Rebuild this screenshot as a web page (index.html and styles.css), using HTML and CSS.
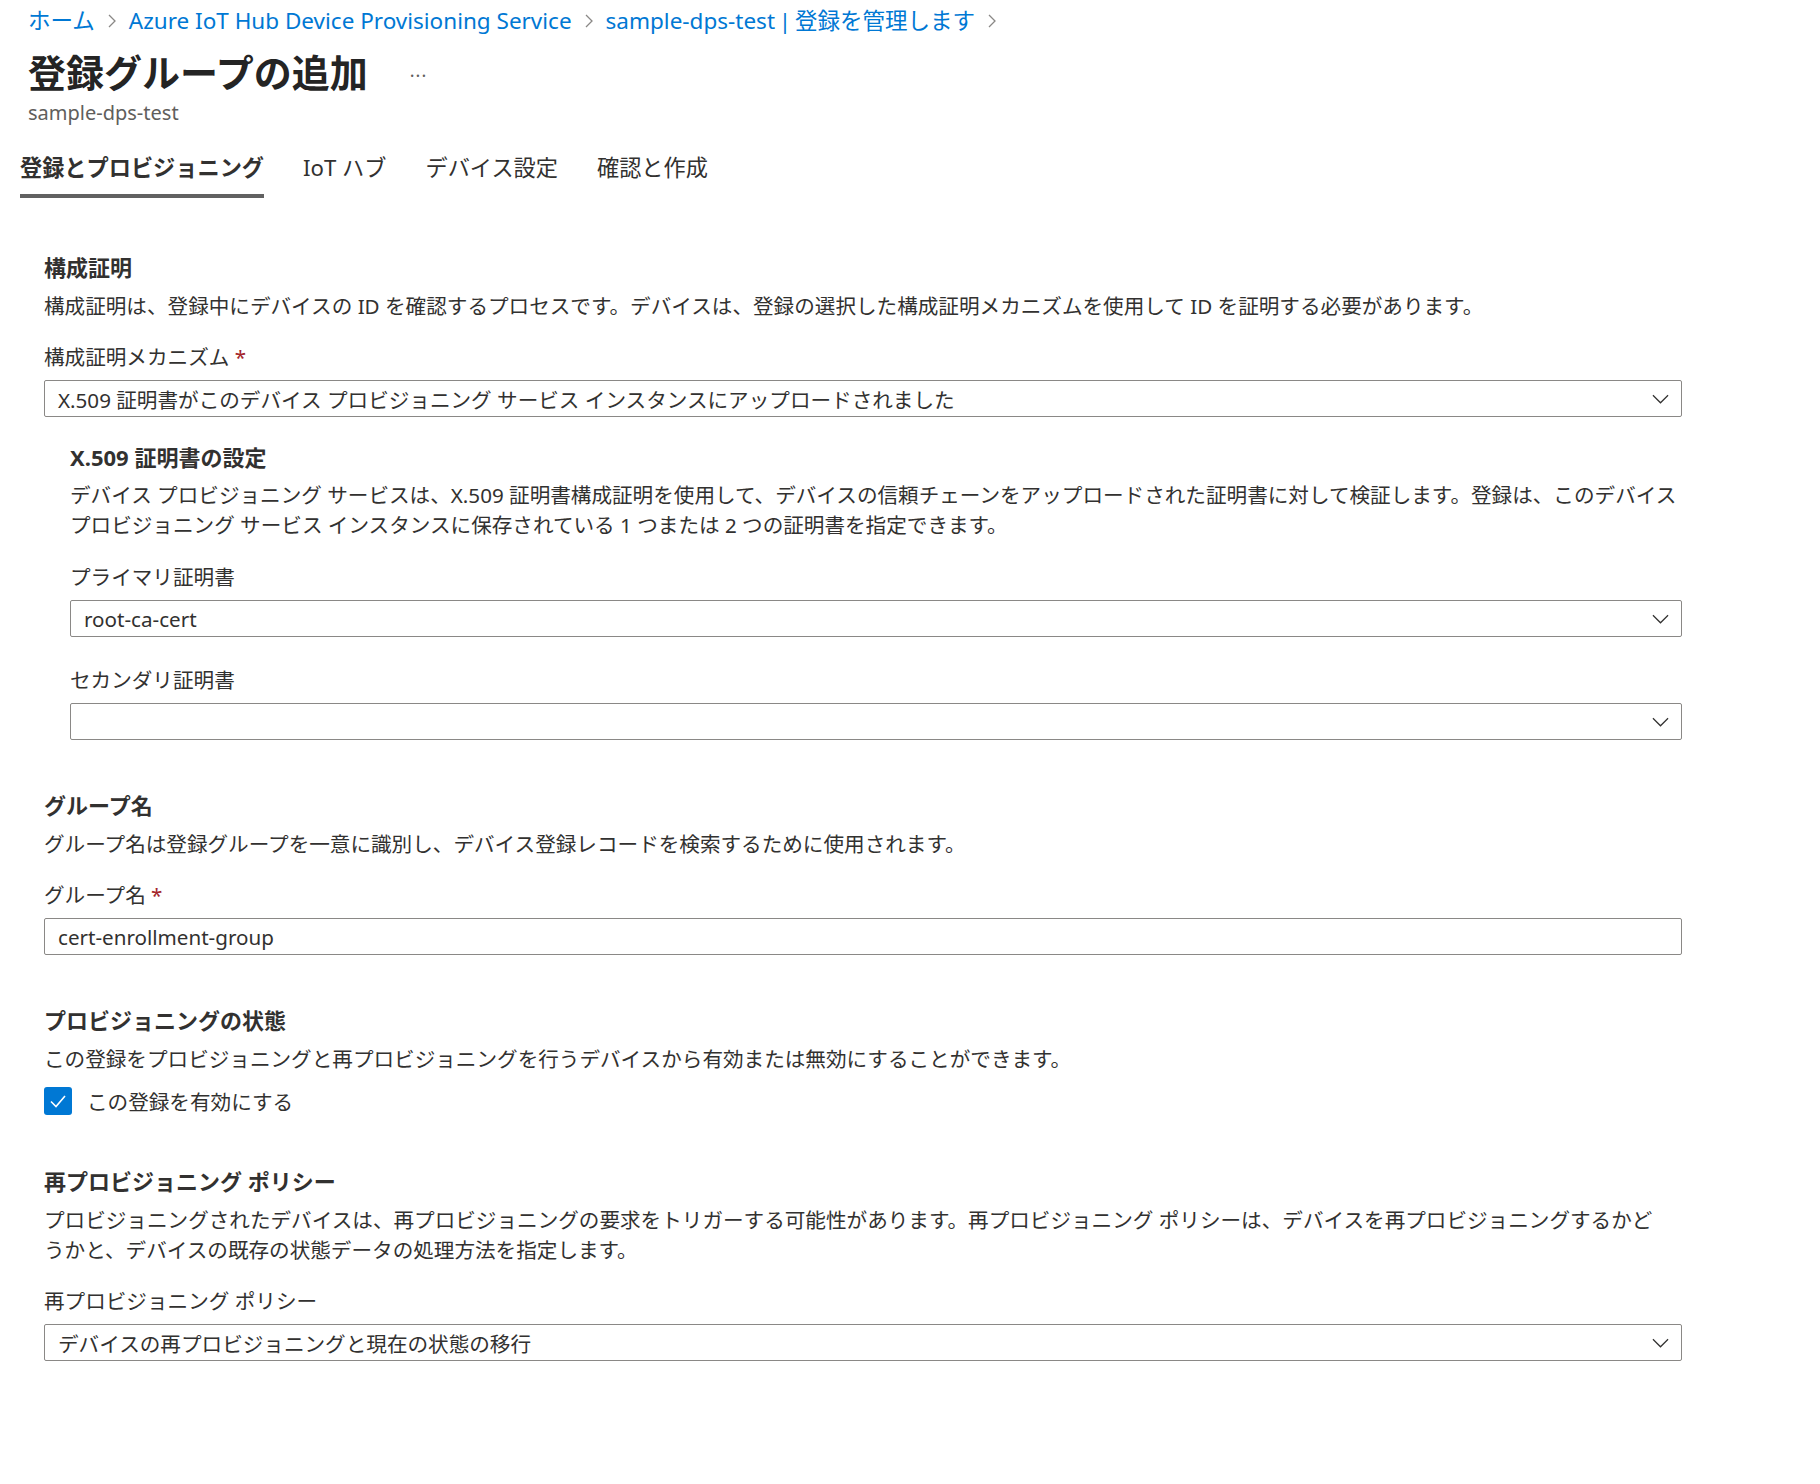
FILE: index.html
```html
<!DOCTYPE html>
<html lang="ja">
<head>
  <meta charset="utf-8">
  <title>登録グループの追加</title>
  <link rel="stylesheet" href="styles.css">
</head>
<body>
  <nav class="breadcrumb">
    <a href="#">ホーム</a>
    <svg class="crumb-sep" viewBox="0 0 8 14"><path d="M1 1 L7 7 L1 13"/></svg>
    <a href="#">Azure IoT Hub Device Provisioning Service</a>
    <svg class="crumb-sep" viewBox="0 0 8 14"><path d="M1 1 L7 7 L1 13"/></svg>
    <a href="#">sample-dps-test&thinsp;|&thinsp;登録を管理します</a>
    <svg class="crumb-sep" viewBox="0 0 8 14"><path d="M1 1 L7 7 L1 13"/></svg>
  </nav>

  <div class="title-row">
    <h1>登録グループの追加</h1>
    <span class="more">···</span>
  </div>
  <div class="subtitle">sample-dps-test</div>

  <div class="tabs">
    <button class="tab-button active">登録とプロビジョニング</button>
    <button class="tab-button">IoT ハブ</button>
    <button class="tab-button">デバイス設定</button>
    <button class="tab-button">確認と作成</button>
  </div>

  <div class="form">
    <section class="section">
      <h2>構成証明</h2>
      <p class="desc">構成証明は、登録中にデバイスの ID を確認するプロセスです。デバイスは、登録の選択した構成証明メカニズムを使用して ID を証明する必要があります。</p>
      <div class="field">
        <label>構成証明メカニズム <span class="req">*</span></label>
        <div class="select">
          <span>X.509 証明書がこのデバイス プロビジョニング サービス インスタンスにアップロードされました</span>
          <svg class="chevron" viewBox="0 0 18 10"><path d="M1 1 L9 9 L17 1"/></svg>
        </div>
      </div>

      <div class="subsection">
        <h3>X.509 証明書の設定</h3>
        <p class="desc">デバイス プロビジョニング サービスは、X.509 証明書構成証明を使用して、デバイスの信頼チェーンをアップロードされた証明書に対して検証します。登録は、このデバイス<br>プロビジョニング サービス インスタンスに保存されている 1 つまたは 2 つの証明書を指定できます。</p>
        <div class="field">
          <label>プライマリ証明書</label>
          <div class="select">
            <span>root-ca-cert</span>
            <svg class="chevron" viewBox="0 0 18 10"><path d="M1 1 L9 9 L17 1"/></svg>
          </div>
        </div>
        <div class="field">
          <label>セカンダリ証明書</label>
          <div class="select">
            <span></span>
            <svg class="chevron" viewBox="0 0 18 10"><path d="M1 1 L9 9 L17 1"/></svg>
          </div>
        </div>
      </div>
    </section>

    <section class="section">
      <h2>グループ名</h2>
      <p class="desc">グループ名は登録グループを一意に識別し、デバイス登録レコードを検索するために使用されます。</p>
      <div class="field">
        <label>グループ名 <span class="req">*</span></label>
        <div class="text-input">cert-enrollment-group</div>
      </div>
    </section>

    <section class="section">
      <h2>プロビジョニングの状態</h2>
      <p class="desc">この登録をプロビジョニングと再プロビジョニングを行うデバイスから有効または無効にすることができます。</p>
      <div class="checkbox-row">
        <span class="checkbox">
          <svg viewBox="0 0 28 28"><path d="M7 14.5 L12 19.5 L21 9"/></svg>
        </span>
        <span>この登録を有効にする</span>
      </div>
    </section>

    <section class="section">
      <h2>再プロビジョニング ポリシー</h2>
      <p class="desc">プロビジョニングされたデバイスは、再プロビジョニングの要求をトリガーする可能性があります。再プロビジョニング ポリシーは、デバイスを再プロビジョニングするかど<br>うかと、デバイスの既存の状態データの処理方法を指定します。</p>
      <div class="field">
        <label>再プロビジョニング ポリシー</label>
        <div class="select">
          <span>デバイスの再プロビジョニングと現在の状態の移行</span>
          <svg class="chevron" viewBox="0 0 18 10"><path d="M1 1 L9 9 L17 1"/></svg>
        </div>
      </div>
    </section>
  </div>
</body>
</html>
```

FILE: styles.css
```css
body {
  margin: 0;
  padding: 6px 0 40px 0;
  font-family: "Noto Sans", "Noto Sans CJK JP", sans-serif;
  color: #323130;
  background: #ffffff;
}
.breadcrumb {
  display: flex;
  align-items: center;
  gap: 13px;
  padding-left: 28px;
  font-size: 22.5px;
  line-height: 30px;
}
.breadcrumb a {
  color: #0078d4;
  text-decoration: none;
}
.crumb-sep {
  width: 8px;
  height: 14px;
  fill: none;
  stroke: #8a8886;
  stroke-width: 1.3;
}
.title-row {
  display: flex;
  align-items: center;
  gap: 42px;
  padding-left: 28px;
  margin-top: 12px;
}
h1 {
  margin: 0;
  font-size: 38px;
  line-height: 48px;
  font-weight: 700;
  color: #242424;
}
.more {
  font-size: 18px;
  color: #605e5c;
  letter-spacing: 1px;
  padding-top: 6px;
}
.subtitle {
  padding-left: 28px;
  margin-top: 4px;
  font-size: 20px;
  line-height: 26px;
  color: #605e5c;
}
.tabs {
  display: flex;
  gap: 39px;
  padding-left: 20px;
  margin-top: 27px;
}
.tab-button {
  background: none;
  border: none;
  border-bottom: 4px solid transparent;
  padding: 0 0 11px 0;
  font-family: inherit;
  font-size: 22.2px;
  line-height: 30px;
  color: #323130;
  cursor: pointer;
}
.tab-button.active {
  font-weight: 600;
  border-bottom-color: #616161;
}
.form {
  width: 1638px;
  padding-left: 44px;
  margin-top: 54px;
}
.section {
  margin-bottom: 50px;
}
h2, h3 {
  margin: 0 0 9px 0;
  font-size: 22px;
  line-height: 30px;
  font-weight: 700;
  color: #323130;
}
.desc {
  margin: 0;
  font-size: 20.6px;
  line-height: 30px;
  color: #323130;
}
.field {
  margin-top: 21px;
}
label {
  display: block;
  font-size: 20.6px;
  line-height: 30px;
  color: #323130;
  margin-bottom: 8px;
}
.req {
  color: #a4262c;
}
.select, .text-input {
  display: flex;
  align-items: center;
  justify-content: space-between;
  box-sizing: border-box;
  height: 37px;
  padding: 0 12px 0 13px;
  border: 1px solid #8a8886;
  border-radius: 2px;
  font-size: 20.6px;
  color: #323130;
}
.chevron {
  width: 17px;
  height: 10px;
  fill: none;
  stroke: #323130;
  stroke-width: 1.3;
}
.subsection {
  margin-left: 26px;
  margin-top: 25px;
}
.subsection h3 {
  margin-bottom: 8px;
}
.subsection .desc {
  white-space: nowrap;
}
.subsection .field {
  margin-top: 22px;
}
.subsection .field + .field {
  margin-top: 28px;
}
.checkbox-row {
  display: flex;
  align-items: center;
  gap: 15px;
  margin-top: 12px;
  font-size: 20.6px;
}
.checkbox {
  width: 28px;
  height: 28px;
  border-radius: 3px;
  background: #0078d4;
  display: flex;
}
.checkbox svg {
  width: 28px;
  height: 28px;
  fill: none;
  stroke: #ffffff;
  stroke-width: 1.6;
}
```
